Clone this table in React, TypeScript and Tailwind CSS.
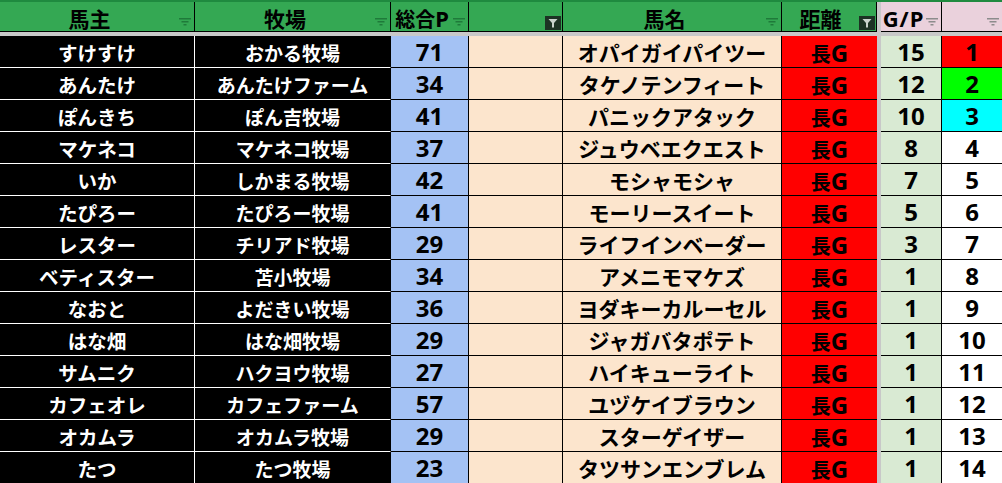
import React from 'react';

const JP = { fontFamily: '"Noto Sans CJK JP", sans-serif' };
const NUM = { fontFamily: '"Noto Sans", "Noto Sans CJK JP", sans-serif' };

interface Row {
  owner: string;
  ranch: string;
  points: number;
  horse: string;
  gp: number;
}

const rows: Row[] = [
  { owner: 'すけすけ', ranch: 'おかる牧場', points: 71, horse: 'オパイガイパイツー', gp: 15 },
  { owner: 'あんたけ', ranch: 'あんたけファーム', points: 34, horse: 'タケノテンフィート', gp: 12 },
  { owner: 'ぽんきち', ranch: 'ぽん吉牧場', points: 41, horse: 'パニックアタック', gp: 10 },
  { owner: 'マケネコ', ranch: 'マケネコ牧場', points: 37, horse: 'ジュウベエクエスト', gp: 8 },
  { owner: 'いか', ranch: 'しかまる牧場', points: 42, horse: 'モシャモシャ', gp: 7 },
  { owner: 'たぴろー', ranch: 'たぴろー牧場', points: 41, horse: 'モーリースイート', gp: 5 },
  { owner: 'レスター', ranch: 'チリアド牧場', points: 29, horse: 'ライフインベーダー', gp: 3 },
  { owner: 'ベティスター', ranch: '苫小牧場', points: 34, horse: 'アメニモマケズ', gp: 1 },
  { owner: 'なおと', ranch: 'よだきい牧場', points: 36, horse: 'ヨダキーカルーセル', gp: 1 },
  { owner: 'はな畑', ranch: 'はな畑牧場', points: 29, horse: 'ジャガバタポテト', gp: 1 },
  { owner: 'サムニク', ranch: 'ハクヨウ牧場', points: 27, horse: 'ハイキューライト', gp: 1 },
  { owner: 'カフェオレ', ranch: 'カフェファーム', points: 57, horse: 'ユヅケイブラウン', gp: 1 },
  { owner: 'オカムラ', ranch: 'オカムラ牧場', points: 29, horse: 'スターゲイザー', gp: 1 },
  { owner: 'たつ', ranch: 'たつ牧場', points: 23, horse: 'タツサンエンブレム', gp: 1 },
];

function FilterIcon({ color }: { color: string }) {
  return (
    <svg width="12" height="8" viewBox="0 0 12 8" className="shrink-0" aria-hidden="true">
      <rect x="0" y="0" width="12" height="1.5" fill={color} />
      <rect x="2.5" y="3" width="7" height="1.5" fill={color} />
      <rect x="4.5" y="6" width="3" height="1.5" fill={color} />
    </svg>
  );
}

function ActiveFilter() {
  return (
    <div className="w-[16px] h-[14px] bg-[#1c3324] flex items-center justify-center shrink-0">
      <svg width="10" height="10" viewBox="0 0 10 10" aria-hidden="true">
        <path d="M0.5 1 H9.5 L6 5 V9.5 H4 V5 Z" fill="#c9d3cc" />
      </svg>
    </div>
  );
}

function HeadCell({
  w,
  label,
  bg,
  filter,
  last,
}: {
  w: string;
  label?: React.ReactNode;
  bg: string;
  filter: 'idle' | 'idlePink' | 'active';
  last?: boolean;
}) {
  return (
    <div
      className={`${w} ${bg} h-full flex items-stretch shrink-0 border-b border-black ${last ? '' : 'border-r'} border-r-black`}
    >
      <div className="flex-1 min-w-0 flex items-center justify-center pt-[3px] whitespace-nowrap">
        {label}
      </div>
      {filter === 'idle' && (
        <div className="w-[15px] flex items-end pb-[5px] shrink-0">
          <FilterIcon color="#1f7a3a" />
        </div>
      )}
      {filter === 'idlePink' && (
        <div className="w-[15px] flex items-end pb-[5px] shrink-0">
          <FilterIcon color="#8c8c8c" />
        </div>
      )}
      {filter === 'active' && (
        <div className="w-[17px] flex items-end pb-[1px] shrink-0">
          <ActiveFilter />
        </div>
      )}
    </div>
  );
}

function rankBg(rank: number) {
  if (rank === 1) return 'bg-[#ff0000]';
  if (rank === 2) return 'bg-[#00ff00]';
  if (rank === 3) return 'bg-[#00ffff]';
  return 'bg-white';
}

export default function App() {
  return (
    <div className="w-[1002px] h-[483px] overflow-hidden bg-white font-bold text-black select-none">
      {/* header */}
      <div className="flex h-[32px] border-t-2 border-[#1f8a3f]">
        <HeadCell w="w-[195px]" bg="bg-[#34a853]" filter="idle" label={<span style={JP} className="text-[21px] leading-none">馬主</span>} />
        <HeadCell w="w-[196px]" bg="bg-[#34a853]" filter="idle" label={<span style={JP} className="text-[21px] leading-none">牧場</span>} />
        <HeadCell
          w="w-[78px]"
          bg="bg-[#34a853]"
          filter="idle"
          label={
            <span className="leading-none">
              <span style={JP} className="text-[20px]">総合</span>
              <span style={NUM} className="text-[22px]">P</span>
            </span>
          }
        />
        <HeadCell w="w-[94px]" bg="bg-[#34a853]" filter="active" />
        <HeadCell w="w-[219px]" bg="bg-[#34a853]" filter="idle" label={<span style={JP} className="text-[21px] leading-none">馬名</span>} />
        <HeadCell w="w-[95px]" bg="bg-[#34a853]" filter="active" label={<span style={JP} className="text-[21px] leading-none">距離</span>} />
        <div className="w-[4px] shrink-0 bg-[#c8c8c8]" />
        <HeadCell
          w="w-[61px]"
          bg="bg-[#ead1dc]"
          filter="idlePink"
          label={<span style={NUM} className="text-[22px] leading-none tracking-[1px]">G/P</span>}
        />
        <HeadCell w="w-[60px]" bg="bg-[#ead1dc]" filter="idlePink" last />
      </div>

      {/* frozen pane divider */}
      <div className="h-[4px] bg-[#c8c8c8]" />

      {/* body */}
      {rows.map((r, i) => (
        <div key={r.owner} className="flex h-[32px]">
          <div
            style={JP}
            className="w-[195px] shrink-0 bg-black text-white border-b border-r border-white flex items-center justify-center pt-[2px] text-[19.5px] leading-none whitespace-nowrap"
          >
            {r.owner}
          </div>
          <div
            style={JP}
            className="w-[196px] shrink-0 bg-black text-white border-b border-white flex items-center justify-center pt-[2px] text-[19px] leading-none whitespace-nowrap border-r border-r-black"
          >
            {r.ranch}
          </div>
          <div
            style={NUM}
            className="w-[78px] shrink-0 bg-[#a4c2f4] border-b border-r border-black flex items-center justify-center pt-[1px] text-[24px] leading-none"
          >
            {r.points}
          </div>
          <div className="w-[94px] shrink-0 bg-[#fce5cd] border-b border-r border-black" />
          <div
            style={JP}
            className="w-[219px] shrink-0 bg-[#fce5cd] border-b border-r border-black flex items-center justify-center pt-[2px] text-[21px] leading-none whitespace-nowrap"
          >
            {r.horse}
          </div>
          <div className="w-[95px] shrink-0 bg-[#ff0000] border-b border-black flex items-center justify-center pt-[2px] whitespace-nowrap">
            <span className="leading-none">
              <span style={JP} className="text-[20px]">長</span>
              <span style={NUM} className="text-[24px]">G</span>
            </span>
          </div>
          <div className="w-[4px] shrink-0 bg-[#c8c8c8]" />
          <div
            style={NUM}
            className="w-[61px] shrink-0 bg-[#d9ead3] border-b border-r border-black flex items-center justify-center pt-[1px] text-[24px] leading-none"
          >
            {r.gp}
          </div>
          <div
            style={NUM}
            className={`w-[60px] shrink-0 ${rankBg(i + 1)} border-b border-black flex items-center justify-center pt-[1px] text-[24px] leading-none`}
          >
            {i + 1}
          </div>
        </div>
      ))}
    </div>
  );
}
